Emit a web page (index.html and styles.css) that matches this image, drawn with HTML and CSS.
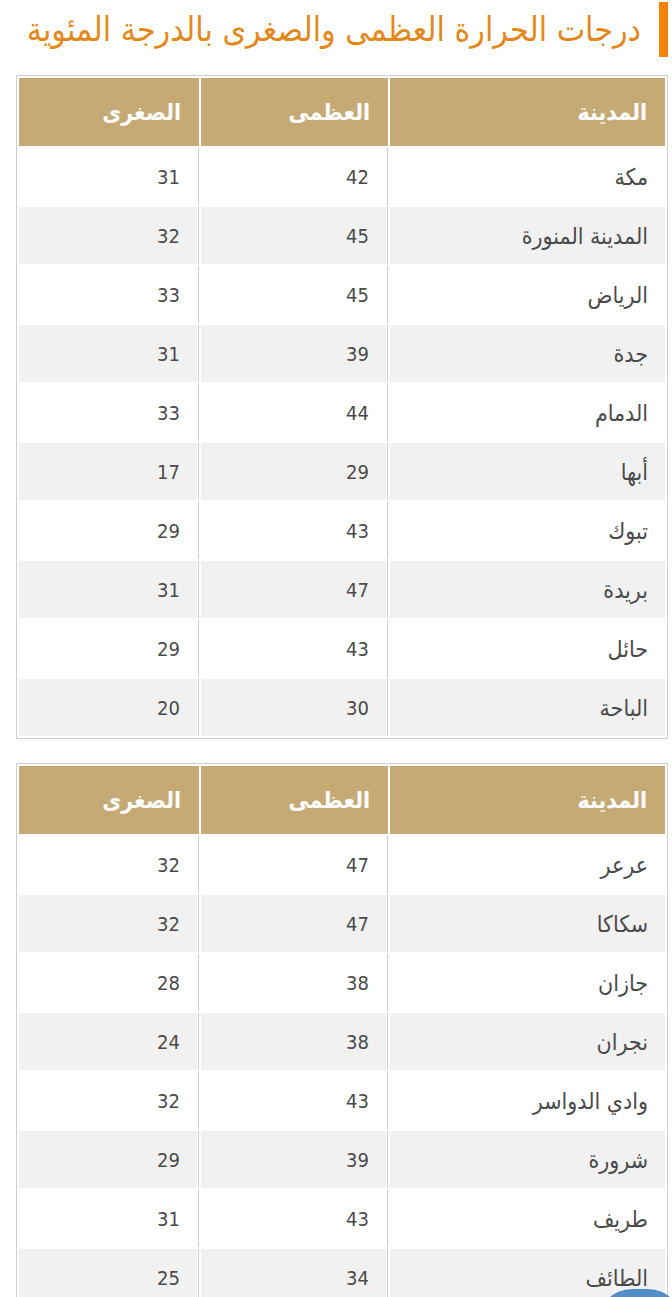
FILE: index.html
```html
<!DOCTYPE html>
<html lang="ar" dir="rtl">
<head>
<meta charset="utf-8">
<title>درجات الحرارة</title>
<link rel="stylesheet" href="styles.css">
</head>
<body>
<div class="page">
  <h2 class="title">درجات الحرارة العظمى والصغرى بالدرجة المئوية</h2>

  <table class="temps">
    <thead>
      <tr><th>المدينة</th><th>العظمى</th><th>الصغرى</th></tr>
    </thead>
    <tbody>
      <tr><td>مكة</td><td>42</td><td>31</td></tr>
      <tr><td>المدينة المنورة</td><td>45</td><td>32</td></tr>
      <tr><td>الرياض</td><td>45</td><td>33</td></tr>
      <tr><td>جدة</td><td>39</td><td>31</td></tr>
      <tr><td>الدمام</td><td>44</td><td>33</td></tr>
      <tr><td>أبها</td><td>29</td><td>17</td></tr>
      <tr><td>تبوك</td><td>43</td><td>29</td></tr>
      <tr><td>بريدة</td><td>47</td><td>31</td></tr>
      <tr><td>حائل</td><td>43</td><td>29</td></tr>
      <tr><td>الباحة</td><td>30</td><td>20</td></tr>
    </tbody>
  </table>

  <table class="temps">
    <thead>
      <tr><th>المدينة</th><th>العظمى</th><th>الصغرى</th></tr>
    </thead>
    <tbody>
      <tr><td>عرعر</td><td>47</td><td>32</td></tr>
      <tr><td>سكاكا</td><td>47</td><td>32</td></tr>
      <tr><td>جازان</td><td>38</td><td>28</td></tr>
      <tr><td>نجران</td><td>38</td><td>24</td></tr>
      <tr><td>وادي الدواسر</td><td>43</td><td>32</td></tr>
      <tr><td>شرورة</td><td>39</td><td>29</td></tr>
      <tr><td>طريف</td><td>43</td><td>31</td></tr>
      <tr><td>الطائف</td><td>34</td><td>25</td></tr>
    </tbody>
  </table>
</div>
<div class="fab"></div>
</body>
</html>
```

FILE: styles.css
```css
html, body {
  margin: 0;
  padding: 0;
  background: #ffffff;
}

body {
  font-family: "DejaVu Sans Condensed", "DejaVu Sans", sans-serif;
  color: #444444;
}

.page {
  padding: 2px 4px 0 17px;
}

.title {
  margin: 0 0 18px 0;
  height: 55px;
  border-right: 9px solid #f3820b;
  padding-right: 18px;
  font-size: 33.6px;
  font-weight: normal;
  color: #e3891c;
  line-height: 55px;
  white-space: nowrap;
}

.temps {
  width: 652px;
  border: 1px solid #cfcfcf;
  border-collapse: separate;
  border-spacing: 2px;
  margin-bottom: 24px;
  table-layout: fixed;
}

.temps th,
.temps td {
  text-align: right;
  vertical-align: middle;
  padding: 0 18px 0 10px;
}

.temps th:nth-child(1),
.temps td:nth-child(1) { width: 247px; }
.temps th:nth-child(2),
.temps td:nth-child(2) { width: 159px; }

.temps th {
  height: 68px;
  background: #c6aa76;
  color: #ffffff;
  font-weight: bold;
  font-size: 23px;
}

.temps td {
  height: 57px;
  font-size: 20px;
  font-weight: normal;
  color: #4a4a4a;
  background: #ffffff;
}

.temps td:first-child {
  font-size: 23px;
  padding-right: 17px;
}

.temps td:not(:first-child) {
  border-right: 1px solid #cccccc;
  box-shadow: inset -1px 0 0 #ffffff;
}

.temps tbody tr:nth-child(even) td {
  background: #f1f1f1;
}

.fab {
  position: fixed;
  right: -10px;
  bottom: -60px;
  width: 84px;
  height: 68px;
  border-radius: 34px;
  background: #4d8fc6;
}
```
